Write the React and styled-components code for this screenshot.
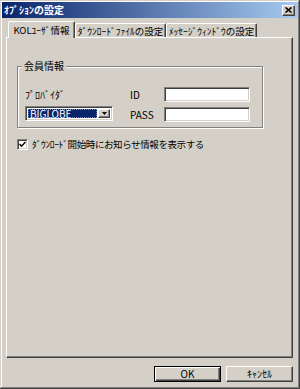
import React from 'react';
import styled, { createGlobalStyle } from 'styled-components';

const GlobalStyle = createGlobalStyle`
    html, body {
        margin: 0;
        padding: 0;
        background: #d4d0c8;
    }
    body {
        font-family: "Noto Sans CJK JP", "Noto Sans", sans-serif;
        font-size: 10px;
        color: #000;
    }
`;

const raised = `
    border: 1px solid;
    border-color: #fff #404040 #404040 #fff;
    box-shadow: inset -1px -1px 0 #808080;
`;

const sunken = `
    border: 1px solid;
    border-color: #808080 #fff #fff #808080;
    box-shadow: inset 1px 1px 0 #404040, inset -1px -1px 0 #d4d0c8;
`;

const Window = styled.div`
    box-sizing: border-box;
    width: 300px;
    height: 389px;
    display: flex;
    flex-direction: column;
    padding: 2px;
    background: #d4d0c8;
    box-shadow: inset -1px -1px 0 #404040, inset 1px 1px 0 #d4d0c8,
        inset -2px -2px 0 #808080, inset 2px 2px 0 #fff;
`;

const TitleBar = styled.div`
    height: 16px;
    display: flex;
    align-items: center;
    justify-content: space-between;
    padding: 0 3px 0 2px;
    background: linear-gradient(to right, #0a246a, #a6caf0);
`;

const Title = styled.span`
    color: #fff;
    font-size: 10px;
    font-weight: 700;
    line-height: 12px;
`;

const CloseButton = styled.div`
    box-sizing: border-box;
    width: 13px;
    height: 11px;
    display: flex;
    align-items: center;
    justify-content: center;
    background: #d4d0c8;
    ${raised}
`;

const TabStrip = styled.div`
    position: relative;
    z-index: 1;
    height: 16px;
    margin: 3px 5px 0 4px;
    padding-left: 2px;
    display: flex;
    align-items: flex-end;
`;

const Tab = styled.div`
    box-sizing: border-box;
    width: ${(p) => p.$w}px;
    height: ${(p) => (p.$active ? 17 : 14)}px;
    margin-bottom: ${(p) => (p.$active ? -1 : 0)}px;
    padding-bottom: ${(p) => (p.$active ? 1 : 0)}px;
    display: flex;
    align-items: center;
    justify-content: center;
    background: #d4d0c8;
    border: 1px solid;
    border-bottom: none;
    border-color: #fff #404040 transparent #fff;
    border-radius: 2px 2px 0 0;
    box-shadow: inset -1px 0 0 #808080;
    font-size: 9.5px;
    line-height: 12px;
    white-space: nowrap;
`;

const Panel = styled.div`
    flex: 1;
    margin: 0 5px 0 4px;
    padding: 28px 10px 0;
    border: 1px solid;
    border-color: #fff #404040 #404040 #fff;
    box-shadow: inset -1px -1px 0 #808080;
`;

const Group = styled.div`
    box-sizing: border-box;
    width: 246px;
    padding: 0 7px 5px;
    border: 1px solid #808080;
    box-shadow: 1px 1px 0 #fff, inset 1px 1px 0 #fff;
`;

const Caption = styled.div`
    display: inline-block;
    margin: -7px 0 0 -3px;
    padding: 0 2px;
    line-height: 12px;
    background: #d4d0c8;
    vertical-align: top;
`;

const FieldGrid = styled.div`
    margin-top: 5px;
    display: grid;
    grid-template-columns: 105px 34px 86px;
    grid-template-rows: 15px 15px;
    row-gap: 5px;
    align-items: center;
`;

const Label = styled.span`
    line-height: 12px;
    white-space: nowrap;
    font-size: ${(p) => (p.$tight ? '9.5px' : 'inherit')};
    letter-spacing: ${(p) => (p.$tight ? '-0.4px' : 'normal')};
`;

const TextBox = styled.div`
    box-sizing: border-box;
    width: 86px;
    height: 15px;
    background: #fff;
    ${sunken}
`;

const Select = styled.div`
    box-sizing: border-box;
    width: 88px;
    height: 15px;
    align-self: start;
    margin-top: -1px;
    padding: 2px;
    display: flex;
    gap: 1px;
    background: #fff;
    ${sunken}
`;

const SelectedValue = styled.div`
    flex: 1;
    display: flex;
    align-items: center;
    padding-left: 2px;
    background: #0a246a;
    color: #fff;
    line-height: 9px;
    outline: 1px dotted #6f84b8;
    outline-offset: -1px;
`;

const DropButton = styled.div`
    box-sizing: border-box;
    width: 12px;
    display: flex;
    align-items: center;
    justify-content: center;
    background: #d4d0c8;
    ${raised}
`;

const CheckRow = styled.div`
    margin-top: 10px;
    display: flex;
    align-items: center;
    gap: 4px;
`;

const CheckBox = styled.div`
    box-sizing: border-box;
    width: 11px;
    height: 11px;
    display: flex;
    align-items: center;
    justify-content: center;
    background: #fff;
    ${sunken}
`;

const ButtonRow = styled.div`
    display: flex;
    justify-content: flex-end;
    gap: 5px;
    padding: 8px 5px 5px;
`;

const Button = styled.div`
    box-sizing: border-box;
    width: 67px;
    height: 16px;
    display: flex;
    align-items: center;
    justify-content: center;
    background: #d4d0c8;
    line-height: 12px;
    ${(p) =>
        p.$default
            ? `border: 1px solid #000;
               box-shadow: inset 1px 1px 0 #fff, inset -1px -1px 0 #404040, inset -2px -2px 0 #808080;`
            : raised}
`;

const App = () => {
    return (
        <>
            <GlobalStyle />
            <Window>
                <TitleBar>
                    <Title>ｵﾌﾟｼｮﾝの設定</Title>
                    <CloseButton>
                        <svg width="7" height="6" viewBox="0 0 7 6">
                            <path d="M0.5 0.5 L6.5 5.5 M6.5 0.5 L0.5 5.5" stroke="#000" strokeWidth="1.6" />
                        </svg>
                    </CloseButton>
                </TitleBar>
                <TabStrip>
                    <Tab $w={67} $active>KOLﾕｰｻﾞ情報</Tab>
                    <Tab $w={91}>ﾀﾞｳﾝﾛｰﾄﾞﾌｧｲﾙの設定</Tab>
                    <Tab $w={91}>ﾒｯｾｰｼﾞｳｨﾝﾄﾞｳの設定</Tab>
                </TabStrip>
                <Panel>
                    <Group>
                        <Caption>会員情報</Caption>
                        <FieldGrid>
                            <Label>ﾌﾟﾛﾊﾞｲﾀﾞ</Label>
                            <Label>ID</Label>
                            <TextBox />
                            <Select>
                                <SelectedValue>BIGLOBE</SelectedValue>
                                <DropButton>
                                    <svg width="5" height="3" viewBox="0 0 5 3">
                                        <polygon points="0,0 5,0 2.5,3" fill="#000" />
                                    </svg>
                                </DropButton>
                            </Select>
                            <Label>PASS</Label>
                            <TextBox />
                        </FieldGrid>
                    </Group>
                    <CheckRow>
                        <CheckBox>
                            <svg width="7" height="7" viewBox="0 0 7 7">
                                <polyline points="0.5,3 2.5,5.2 6.5,1" fill="none" stroke="#000" strokeWidth="1.5" />
                            </svg>
                        </CheckBox>
                        <Label $tight>ﾀﾞｳﾝﾛｰﾄﾞ開始時にお知らせ情報を表示する</Label>
                    </CheckRow>
                </Panel>
                <ButtonRow>
                    <Button $default>OK</Button>
                    <Button>ｷｬﾝｾﾙ</Button>
                </ButtonRow>
            </Window>
        </>
    );
};

export default App;
